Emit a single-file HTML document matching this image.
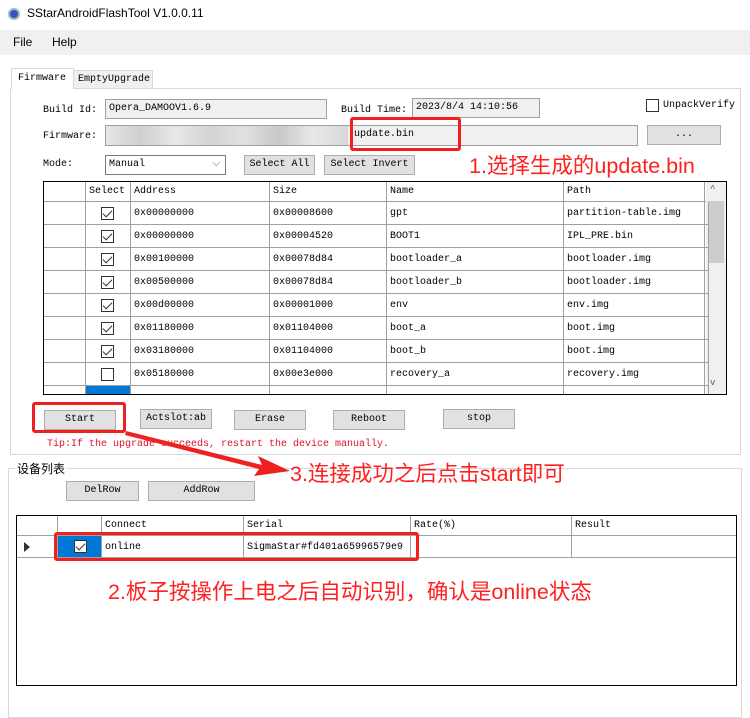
<!DOCTYPE html>
<html><head><meta charset="utf-8"><style>
*{box-sizing:border-box;margin:0;padding:0}
body{width:750px;height:711px;position:relative;background:#fff;overflow:hidden;font-family:"Liberation Mono","Noto Sans CJK SC",monospace;font-size:10px;color:#000}
.a{position:absolute}
.btn{position:absolute;background:#e1e1e1;border:1px solid #adadad;text-align:center;line-height:18px;height:20px}
.inp{position:absolute;background:#f0f0f0;border:1px solid #a0a0a0;padding-left:3px;line-height:17px}
.red{position:absolute;color:#ff2020;font-family:"Liberation Sans","Noto Sans CJK SC",sans-serif;font-size:21.5px;white-space:nowrap}
.rb{position:absolute;border:3px solid #f02020;border-radius:3px}
.cell{position:absolute;border-right:1px solid #a0a0a0;border-bottom:1px solid #a0a0a0;padding-left:3px;line-height:22px;white-space:nowrap;overflow:hidden}
.cb{position:absolute;width:13px;height:13px;border:1px solid #333;background:#fff}
.ck::after{content:"";position:absolute;left:3px;top:0px;width:4px;height:8px;border:solid #333;border-width:0 1.5px 1.5px 0;transform:rotate(45deg)}
</style></head><body>
<div class="a" style="left:8px;top:8px;width:12px;height:12px;border-radius:50%;background:#3d4fc2;border:2px solid #9bb"></div>
<div class="a" style="left:27px;top:6px;font-family:'Liberation Sans',sans-serif;font-size:12px">SStarAndroidFlashTool V1.0.0.11</div>
<div class="a" style="left:0;top:30px;width:750px;height:25px;background:#f0f0f0"></div>
<div class="a" style="left:13px;top:35px;font-family:'Liberation Sans',sans-serif;font-size:12px">File</div>
<div class="a" style="left:52px;top:35px;font-family:'Liberation Sans',sans-serif;font-size:12px">Help</div>
<div class="a" style="left:10px;top:88px;width:731px;height:367px;border:1px solid #d9d9d9"></div>
<div class="a" style="left:73px;top:70px;width:80px;height:19px;border:1px solid #d9d9d9;background:#f0f0f0;padding:3px 0 0 4px">EmptyUpgrade</div>
<div class="a" style="left:11px;top:68px;width:63px;height:21px;border:1px solid #d9d9d9;border-bottom:none;background:#fff;padding:4px 0 0 6px">Firmware</div>
<div class="a" style="left:43px;top:105px">Build Id:</div>
<div class="inp" style="left:105px;top:99px;width:222px;height:20px">Opera_DAMOOV1.6.9</div>
<div class="a" style="left:341px;top:105px">Build Time:</div>
<div class="inp" style="left:412px;top:98px;width:128px;height:20px">2023/8/4 14:10:56</div>
<div class="cb" style="left:646px;top:99px"></div>
<div class="a" style="left:663px;top:100px">UnpackVerify</div>
<div class="a" style="left:43px;top:131px">Firmware:</div>
<div class="inp" style="left:105px;top:125px;width:533px;height:21px;padding-left:248px">update.bin</div>
<div class="a" style="left:106px;top:126px;width:242px;height:19px;background:linear-gradient(90deg,#e6e6e6,#cfcfcf,#e8e8e8,#d4d4d4,#e0e0e0,#c8c8c8,#e8e8e8,#d8d8d8)"></div>
<div class="btn" style="left:647px;top:125px;width:74px">...</div>
<div class="rb" style="left:350px;top:117px;width:111px;height:34px"></div>
<div class="a" style="left:43px;top:159px">Mode:</div>
<div class="a" style="left:105px;top:155px;width:121px;height:20px;border:1px solid #7a7a7a;background:#fff;padding-left:3px;line-height:17px">Manual<span style="position:absolute;right:5px;top:0;color:#555">⌵</span></div>
<div class="btn" style="left:244px;top:155px;width:71px">Select All</div>
<div class="btn" style="left:324px;top:155px;width:91px">Select Invert</div>
<div class="red" style="left:469px;top:149px">1.选择生成的update.bin</div>
<div class="a" style="left:43px;top:181px;width:684px;height:214px;border:1px solid #000;overflow:hidden;background:#fff">
<div style="position:relative">
<div class="cell" style="left:0;top:0;width:42px;height:20px"></div>
<div class="cell" style="left:42px;top:0;width:45px;height:20px;line-height:20px">Select</div>
<div class="cell" style="left:87px;top:0;width:139px;height:20px;line-height:20px">Address</div>
<div class="cell" style="left:226px;top:0;width:117px;height:20px;line-height:20px">Size</div>
<div class="cell" style="left:343px;top:0;width:177px;height:20px;line-height:20px">Name</div>
<div class="cell" style="left:520px;top:0;width:141px;height:20px;line-height:20px">Path</div>
<div class="cell" style="left:661px;top:0;width:4px;height:20px"></div>
</div>
<div class="a" style="left:662px;top:0;width:20px;height:212px;background:#f0f0f0"></div>
<div class="a" style="left:664px;top:19px;width:16px;height:62px;background:#cdcdcd"></div>
<div class="a" style="left:666px;top:2px;color:#555;font-size:9px">^</div>
<div class="a" style="left:666px;top:196px;color:#555;font-size:9px">v</div>
</div>
<div id="rows"></div>
<div class="btn" style="left:44px;top:410px;width:72px">Start</div>
<div class="btn" style="left:140px;top:409px;width:72px">Actslot:ab</div>
<div class="btn" style="left:234px;top:410px;width:72px">Erase</div>
<div class="btn" style="left:333px;top:410px;width:72px">Reboot</div>
<div class="btn" style="left:443px;top:409px;width:72px">stop</div>
<div class="rb" style="left:32px;top:402px;width:94px;height:31px"></div>
<div class="a" style="left:47px;top:439px;color:#e0102a">Tip:If the upgrade succeeds, restart the device manually.</div>
<div class="a" style="left:8px;top:468px;width:734px;height:250px;border:1px solid #d9d9d9"></div>
<div class="a" style="left:15px;top:460px;background:#fff;padding:0 2px;font-family:'Liberation Sans','Noto Sans CJK SC',sans-serif;font-size:12px">设备列表</div>
<div class="btn" style="left:66px;top:481px;width:73px">DelRow</div>
<div class="btn" style="left:148px;top:481px;width:107px">AddRow</div>
<div class="a" style="left:16px;top:515px;width:721px;height:171px;border:1px solid #000;background:#fff;overflow:hidden">
<div class="cell" style="left:0;top:0;width:41px;height:20px"></div>
<div class="cell" style="left:41px;top:0;width:44px;height:20px"></div>
<div class="cell" style="left:85px;top:0;width:142px;height:20px;line-height:20px">Connect</div>
<div class="cell" style="left:227px;top:0;width:167px;height:20px;line-height:20px">Serial</div>
<div class="cell" style="left:394px;top:0;width:161px;height:20px;line-height:20px">Rate(%)</div>
<div class="cell" style="left:555px;top:0;width:165px;height:20px;line-height:20px">Result</div>
<div class="cell" style="left:0;top:20px;width:41px;height:22px"><span style="position:absolute;left:7px;top:6px;border-left:6px solid #333;border-top:5px solid transparent;border-bottom:5px solid transparent"></span></div>
<div class="cell" style="left:41px;top:20px;width:44px;height:22px;background:#0078d7"></div>
<div class="cb ck" style="left:57px;top:24px"></div>
<div class="cell" style="left:85px;top:20px;width:142px;height:22px;line-height:23px">online</div>
<div class="cell" style="left:227px;top:20px;width:167px;height:22px;line-height:23px">SigmaStar#fd401a65996579e9</div>
<div class="cell" style="left:394px;top:20px;width:161px;height:22px"></div>
<div class="cell" style="left:555px;top:20px;width:165px;height:22px"></div>
</div>
<div class="rb" style="left:54px;top:532px;width:365px;height:29px"></div>
<div class="red" style="left:108px;top:575px">2.板子按操作上电之后自动识别，确认是online状态</div>
<div class="red" style="left:290px;top:457px">3.连接成功之后点击start即可</div>
<svg class="a" style="left:0;top:0" width="750" height="711"><path d="M126 431 L262 465 L258 456 L290 471 L254 476 L259 469 L125 435 Z" fill="#f02020"/></svg>
<script>
var d=[["0x00000000","0x00008600","gpt","partition-table.img",1],["0x00000000","0x00004520","BOOT1","IPL_PRE.bin",1],["0x00100000","0x00078d84","bootloader_a","bootloader.img",1],["0x00500000","0x00078d84","bootloader_b","bootloader.img",1],["0x00d00000","0x00001000","env","env.img",1],["0x01180000","0x01104000","boot_a","boot.img",1],["0x03180000","0x01104000","boot_b","boot.img",1],["0x05180000","0x00e3e000","recovery_a","recovery.img",0],["","","","",0]];
var h="";d.forEach(function(r,i){var t=202+i*23;var L=44;
h+='<div class="cell" style="left:'+L+'px;top:'+t+'px;width:42px;height:23px"></div>';
h+='<div class="cell" style="left:'+(L+42)+'px;top:'+t+'px;width:45px;height:23px;'+(i==8?'background:#0078d7':'')+'"></div>';
if(i<8)h+='<div class="cb'+(r[4]?' ck':'')+'" style="left:101px;top:'+(t+5)+'px"></div>';
h+='<div class="cell" style="left:'+(L+87)+'px;top:'+t+'px;width:139px;height:23px;line-height:23px">'+r[0]+'</div>';
h+='<div class="cell" style="left:'+(L+226)+'px;top:'+t+'px;width:117px;height:23px;line-height:23px">'+r[1]+'</div>';
h+='<div class="cell" style="left:'+(L+343)+'px;top:'+t+'px;width:177px;height:23px;line-height:23px">'+r[2]+'</div>';
h+='<div class="cell" style="left:'+(L+520)+'px;top:'+t+'px;width:141px;height:23px;line-height:23px">'+r[3]+'</div>';
h+='<div class="cell" style="left:'+(L+661)+'px;top:'+t+'px;width:4px;height:23px"></div>';});
var c=document.createElement('div');c.className='a';c.style.cssText='left:0;top:0;width:750px;height:394px;overflow:hidden';
c.innerHTML=h;document.getElementById('rows').appendChild(c);
</script>
</body></html>
